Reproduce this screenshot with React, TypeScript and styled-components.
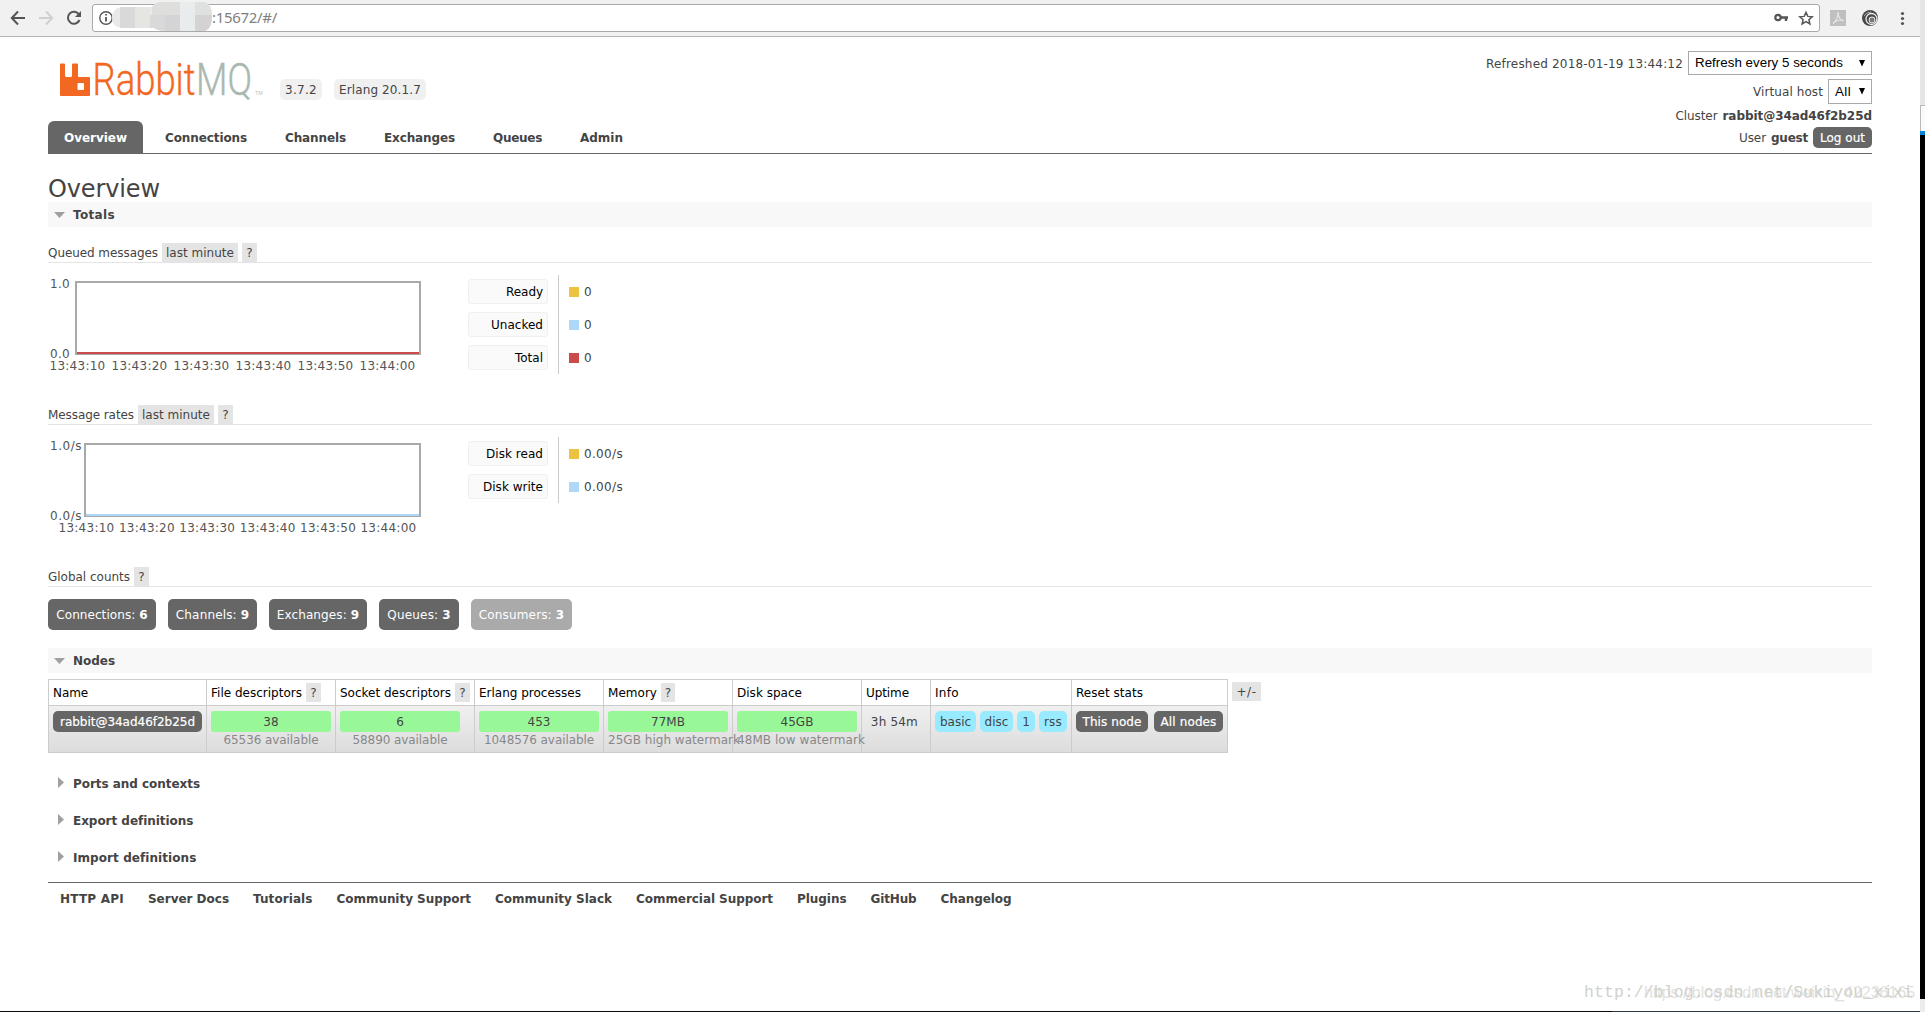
import React, { useLayoutEffect, useRef } from 'react';
import styled, { createGlobalStyle, css } from 'styled-components';

const Global = createGlobalStyle`
  * { box-sizing: border-box; }
  body {
    margin: 0;
    overflow: hidden;
    background: #fff;
    color: #444;
    font: 12px/20px Verdana, "DejaVu Sans", sans-serif;
  }
`;

/* ---------- text that keeps a fixed measure whatever the font's metrics ---------- */

const Run = styled.span`
  display: inline-block;
  white-space: pre;
`;

function Fit({ w, children }: { w: number; children: string }) {
  const ref = useRef<HTMLSpanElement>(null);
  useLayoutEffect(() => {
    const el = ref.current;
    if (!el) return;
    el.style.letterSpacing = '0px';
    el.style.width = 'auto';
    const natural = el.getBoundingClientRect().width;
    el.style.letterSpacing = `${(w - natural) / children.length}px`;
    el.style.width = `${w}px`;
  }, [w, children]);
  return <Run ref={ref}>{children}</Run>;
}

/* ---------- window ---------- */

const Screen = styled.div`
  display: grid;
  grid-template-columns: 1920px 5px;
  height: 1012px;
  overflow: hidden;
`;

const Window = styled.div`
  display: flex;
  flex-direction: column;
  position: relative;
  height: 1012px;
`;

const Edge = styled.div`
  display: flex;
  flex-direction: column;
`;

const EdgePart = styled.div<{ $h: number; $bg: string; $line?: boolean }>`
  height: ${p => p.$h}px;
  flex: none;
  background: ${p => p.$bg};
  ${p => p.$line && css`border-left: 1px solid #b8b8b8; border-top: 1px solid #b8b8b8;`}
`;

const BottomEdge = styled.div`
  height: 1px;
  margin-top: auto;
  background: linear-gradient(90deg, #0a0a0a 0 1612px, #2b3a49 1612px);
`;

/* ---------- browser toolbar ---------- */

const Toolbar = styled.div`
  display: flex;
  flex: none;
  height: 37px;
  background: #f1f1f1;
  border-bottom: 1px solid #b5b3b5;
`;

const NavIcons = styled.svg`
  flex: none;
  width: 92px;
  height: 36px;
`;

const AddressBar = styled.div`
  display: flex;
  align-items: center;
  width: 1728px;
  height: 28px;
  margin-top: 4px;
  background: #fff;
  border: 1px solid #a9a9a9;
  border-radius: 3px;
`;

const AddressStart = styled.svg`
  flex: none;
  width: 119px;
  height: 32px;
`;

const Url = styled.span`
  flex: 1;
  height: 26px;
  color: #808080;
  font: 15px/24px "Noto Sans", sans-serif;
`;

const AddressIcons = styled.svg`
  flex: none;
  width: 50px;
  height: 26px;
`;

const ToolIcons = styled.svg`
  flex: none;
  width: 100px;
  height: 36px;
`;

/* ---------- page header ---------- */

const Header = styled.header`
  display: flex;
  flex: none;
  justify-content: space-between;
  height: 117px;
  margin: 0 48px;
  border-bottom: 1px solid #666;
`;

const Brand = styled.div`
  display: flex;
  flex-direction: column;
`;

const LogoRow = styled.div`
  display: flex;
  height: 84px;
  padding-left: 12px;
`;

const Logo = styled.svg`
  width: 220px;
  height: 84px;
`;

const Version = styled.span`
  height: 21px;
  margin: 42px 12px 0 0;
  padding: 0 5px;
  line-height: 23px;
  background: #f0f0f0;
  border-radius: 5px;
`;

const Tabs = styled.nav`
  display: flex;
  gap: 6px;
`;

const Tab = styled.a<{ $active?: boolean }>`
  height: 32px;
  padding: 0 16px;
  line-height: 35px;
  font-weight: bold;
  border-radius: 6px 6px 0 0;
  ${p => p.$active && css`color: #fff; background: #666;`}
`;

const Status = styled.div`
  display: flex;
  flex-direction: column;
  align-items: flex-end;
  padding-top: 14px;
`;

const StatusRow = styled.div<{ $h: number; $drop?: number }>`
  display: flex;
  align-items: center;
  gap: 5px;
  height: ${p => p.$h}px;
  & > span { margin-top: ${p => p.$drop || 0}px; }
`;

const Select = styled.div<{ $w: number; $h: number }>`
  display: flex;
  align-items: center;
  justify-content: space-between;
  width: ${p => p.$w}px;
  height: ${p => p.$h}px;
  padding: 0 6px;
  color: #000;
  background: #fff;
  border: 1px solid #a9a9a9;
  font: 13.33px/20px "Liberation Sans", Arial, sans-serif;
`;

const Caret = styled.svg`
  width: 6px;
  height: 7px;
  fill: #000;
`;

const Button = styled.button<{ $w?: number }>`
  display: flex;
  justify-content: center;
  flex: none;
  width: ${p => p.$w}px;
  height: 21px;
  padding: 1px 0 0;
  border: 0;
  border-radius: 5px;
  background: #666;
  color: #fff;
  font: 12px/21px Verdana, "DejaVu Sans", sans-serif;
  -webkit-text-stroke: 0.2px #fff;
`;

/* ---------- page body ---------- */

const Main = styled.main`
  display: flex;
  flex-direction: column;
  margin: 0 48px;
`;

const Title = styled.h1`
  height: 48px;
  margin: 0;
  font-size: 24px;
  font-weight: normal;
  line-height: 71px;
`;

const Section = styled.h2<{ $open?: boolean; $mb?: number }>`
  display: flex;
  align-items: flex-start;
  height: 25px;
  margin: 0 0 ${p => p.$mb || 0}px;
  font-size: 12px;
  line-height: 27px;
  background: ${p => (p.$open ? '#f8f8f8' : 'transparent')};
`;

const Arrow = styled.svg`
  width: 25px;
  height: 25px;
  fill: #a0a0a0;
`;

const Caption = styled.h3`
  display: flex;
  gap: 4px;
  height: 20px;
  margin: 0;
  font-size: 12px;
  font-weight: normal;
  line-height: 21px;
  border-bottom: 1px solid #e4e4e4;
`;

const Chip = styled.span<{ $w: number }>`
  display: inline-block;
  flex: none;
  width: ${p => p.$w}px;
  height: 19px;
  line-height: 21px;
  color: #444;
  background: #e4e4e4;
  text-align: center;
`;

const Stats = styled.div<{ $h: number }>`
  display: flex;
  height: ${p => p.$h}px;
  padding-top: 12px;
`;

const ChartGrid = styled.div<{ $label: number }>`
  display: grid;
  grid-template-columns: ${p => p.$label}px ${p => 373 - p.$label}px;
  grid-template-rows: 74px 20px;
  width: 420px;
  padding-top: 6px;
`;

const YAxis = styled.div`
  display: flex;
  flex-direction: column;
  align-items: flex-start;
  justify-content: space-between;
  height: 90px;
  margin-top: -7px;
  padding-left: 2px;
  color: #545454;
`;

const Plot = styled.div<{ $line: string }>`
  display: flex;
  align-items: flex-end;
  border: 2px solid #a9a9a9;
  border-bottom-width: 1px;
  &::after {
    content: "";
    flex: 1;
    height: 2px;
    background: ${p => p.$line};
  }
`;

const XAxis = styled.div<{ $start: number; $gap: number }>`
  display: flex;
  grid-column: 1 / 3;
  gap: ${p => p.$gap}px;
  padding: 1px 0 0 ${p => p.$start}px;
  color: #545454;
`;

const Legend = styled.div<{ $rows: number }>`
  display: grid;
  grid-template-columns: 90px auto;
  grid-auto-rows: 33px;
  align-items: center;
  height: ${p => p.$rows * 33}px;
`;

const LegendName = styled.div`
  width: 80px;
  height: 25px;
  padding-right: 4px;
  line-height: 25px;
  color: #000;
  text-align: right;
  background: #fafafa;
  border: 1px solid #f0f0f0;
  border-radius: 3px;
`;

const LegendValue = styled.div`
  display: flex;
  align-items: center;
  gap: 5px;
  height: 33px;
  padding-left: 10px;
  border-left: 1px solid #ccc;
`;

const Swatch = styled.i<{ $c: string }>`
  width: 10px;
  height: 10px;
  margin-top: 1px;
  background: ${p => p.$c};
`;

const Counts = styled.div`
  display: flex;
  gap: 12px;
  height: 61px;
  padding-top: 12px;
`;

const Count = styled.a<{ $w: number; $off?: boolean }>`
  display: flex;
  justify-content: center;
  width: ${p => p.$w}px;
  height: 31px;
  line-height: 33px;
  color: #fff;
  background: ${p => (p.$off ? '#aaa' : '#666')};
  border-radius: 5px;
  b { margin-left: 4px; }
`;

const NodesRow = styled.div`
  display: flex;
  gap: 4px;
  height: 98px;
  padding-top: 6px;
  & > span { margin-top: 3px; }
`;

const Table = styled.div`
  display: grid;
  grid-template-columns: 158px 129px 139px 129px 129px 129px 69px 141px 156px;
  grid-template-rows: 26px 47px;
  width: 1180px;
  height: 74px;
  border-left: 1px solid #ccc;
  border-top: 1px solid #ccc;
`;

const Th = styled.div`
  display: flex;
  align-items: center;
  gap: 4px;
  padding-left: 4px;
  color: #000;
  border: solid #ccc;
  border-width: 0 1px 1px 0;
`;

const Td = styled.div`
  padding: 5px 0 0 4px;
  border: solid #ccc;
  border-width: 0 1px 1px 0;
  background: linear-gradient(#f0f0f0, #dcdcdc);
`;

const Bar = styled.div`
  width: 120px;
  height: 21px;
  line-height: 23px;
  text-align: center;
  background: #98f898;
  border-radius: 3px;
`;

const Sub = styled.div`
  position: relative;
  width: 120px;
  height: 16px;
  line-height: 16px;
  color: #888;
  text-align: center;
  white-space: nowrap;
`;

const Inline = styled.div<{ $gap: number }>`
  display: flex;
  gap: ${p => p.$gap}px;
  height: 21px;
  line-height: 23px;
`;

const Tag = styled.span<{ $w: number }>`
  width: ${p => p.$w}px;
  text-align: center;
  background: #98ebff;
  border-radius: 5px;
`;

const Footer = styled.footer`
  display: flex;
  gap: 24px;
  padding: 6px 0 0 12px;
  font-weight: bold;
  border-top: 1px solid #666;
`;

/* The two blog addresses are stamped over the page's lower right corner. */
const Stamp = styled.div<{ $right: number; $bottom: number; $mono?: boolean }>`
  position: absolute;
  right: ${p => p.$right}px;
  bottom: ${p => p.$bottom}px;
  line-height: 20px;
  ${p => p.$mono
    ? css`color: #d2d2cc; font-family: "Liberation Mono", monospace; font-size: 16.5px;`
    : css`color: #e2e2e2; font-family: "Liberation Sans", sans-serif; font-size: 16px;`}
`;

/* ---------- data ---------- */

const tabs: [string, number][] = [
  ['Overview', 63], ['Connections', 82], ['Channels', 61], ['Exchanges', 71], ['Queues', 49], ['Admin', 43],
];
const times = ['13:43:10', '13:43:20', '13:43:30', '13:43:40', '13:43:50', '13:44:00'];
const counts: [string, number, number, number][] = [
  ['Connections:', 6, 108, 79], ['Channels:', 9, 89, 61], ['Exchanges:', 9, 98, 70], ['Queues:', 3, 80, 51], ['Consumers:', 3, 101, 73],
];
const links: [string, number][] = [
  ['HTTP API', 64], ['Server Docs', 81], ['Tutorials', 59.5], ['Community Support', 134.5], ['Community Slack', 117],
  ['Commercial Support', 137], ['Plugins', 49.5], ['GitHub', 46], ['Changelog', 71],
];
const bars: [string, string, number][] = [
  ['38', '65536 available', 95], ['6', '58890 available', 95], ['453', '1048576 available', 110],
  ['77MB', '25GB high watermark', 132], ['45GB', '48MB low watermark', 128],
];

function Chart({ label, unit, line, start, gap }: { label: number; unit: string; line: string; start: number; gap: number }) {
  const w = unit ? 32 : 20;
  return (
    <ChartGrid $label={label}>
      <YAxis><Fit w={w}>{'1.0' + unit}</Fit><Fit w={w}>{'0.0' + unit}</Fit></YAxis>
      <Plot $line={line} />
      <XAxis $start={start} $gap={gap}>{times.map(t => <Fit key={t} w={56}>{t}</Fit>)}</XAxis>
    </ChartGrid>
  );
}

function Key({ rows }: { rows: [string, number, string, string, number][] }) {
  return (
    <Legend $rows={rows.length}>
      {rows.map(([name, w, color, value, vw]) => (
        <React.Fragment key={name}>
          <LegendName><Fit w={w}>{name}</Fit></LegendName>
          <LegendValue><Swatch $c={color} /><Fit w={vw}>{value}</Fit></LegendValue>
        </React.Fragment>
      ))}
    </Legend>
  );
}

const Down = () => <Arrow viewBox="0 0 25 25"><path d="M6 10H17L11.5 16Z" /></Arrow>;
const Right = () => <Arrow viewBox="0 0 25 25"><path d="M10 6L16 11.5L10 17Z" /></Arrow>;
const Drop = () => <Caret viewBox="0 0 6 7"><path d="M0 0H6L3 6.5Z" /></Caret>;

export default function App() {
  return (
    <Screen>
      <Global />
      <Window>
        <Toolbar>
          <NavIcons viewBox="0 0 92 36" fill="none" strokeWidth="2">
            <path d="M25 18H12M18 11.5L11.8 18L18 24.5" stroke="#555" />
            <path d="M39 18H52M46 11.5L52.2 18L46 24.5" stroke="#d0d0d0" />
            <path d="M79 14.5A6 6 0 1 0 79.5 20" stroke="#555" />
            <path d="M81 11V17H75Z" fill="#555" />
          </NavIcons>
          <AddressBar>
            <AddressStart viewBox="93 2 119 32">
              <circle cx="106" cy="18" r="6.2" fill="none" stroke="#555" strokeWidth="1.4" />
              <path d="M106 17V21.5M106 14V15.6" stroke="#555" strokeWidth="1.8" />
              <clipPath id="smudge"><path d="M122 7H152Q156 1 166 1H198Q212 1 212 15Q212 31 203 31H168Q157 31 154 28H122Q112 27 112 18Q112 8 122 7Z" /></clipPath>
              <g clipPath="url(#smudge)">
                <rect x="110" y="0" width="105" height="34" fill="#e9e9e8" />
                <rect x="120" y="7" width="15" height="21" fill="#d8dad9" />
                <rect x="135" y="7" width="15" height="21" fill="#e5e5e2" />
                <rect x="152" y="0" width="28" height="15" fill="#dededd" />
                <rect x="150" y="15" width="15" height="16" fill="#d9d9d9" />
                <rect x="165" y="15" width="15" height="16" fill="#d4d3d5" />
                <rect x="180" y="0" width="15" height="34" fill="#e9ecec" />
                <rect x="195" y="0" width="17" height="15" fill="#dfe0e0" />
                <rect x="195" y="15" width="17" height="16" fill="#d5d2d3" />
              </g>
            </AddressStart>
            <Url><Fit w={65}>:15672/#/</Fit></Url>
            <AddressIcons viewBox="1769 5 50 26">
              <g fill="none" stroke="#555">
                <circle cx="1778" cy="17.5" r="2.7" strokeWidth="2.2" />
                <path d="M1781 17.5H1788M1786 17.5V21" strokeWidth="2.4" />
                <path d="M1806 12.3L1807.8 16.4L1812.2 16.8L1808.9 19.7L1809.9 24L1806 21.7L1802.1 24L1803.1 19.7L1799.8 16.8L1804.2 16.4Z" strokeWidth="1.5" />
              </g>
            </AddressIcons>
          </AddressBar>
          <ToolIcons viewBox="1820 0 100 36" fill="none">
            <rect x="1830" y="10" width="16" height="16" fill="#c0c0c0" />
            <path d="M1838 12.5C1838.5 17 1840 20 1843.5 20.5C1840 19.5 1836 20.5 1833 23.5C1836 21 1838.5 16 1838 12.5Z" stroke="#f1f1f1" />
            <circle cx="1870" cy="18" r="8" fill="#484848" />
            <circle cx="1871.5" cy="19" r="5.5" stroke="#eee" strokeWidth="1.3" />
            <circle cx="1872" cy="20" r="3" fill="#777" stroke="#eee" />
            <path d="M1864 16Q1866 12 1871 12" stroke="#aaa" />
            <g fill="#555"><circle cx="1902.5" cy="13.5" r="1.6" /><circle cx="1902.5" cy="18.5" r="1.6" /><circle cx="1902.5" cy="23.5" r="1.6" /></g>
          </ToolIcons>
        </Toolbar>

        <Header>
          <Brand>
            <LogoRow>
              <Logo viewBox="60 37 220 84">
                <path d="M60 64.5Q60 63.5 61 63.5H64Q65 63.5 65 64.5V75.5Q65 77 66.5 77H70.5Q72 77 72 75.5V64.5Q72 63.5 73 63.5H77Q78 63.5 78 64.5V76Q78 77 79 77H89Q90 77 90 78V95Q90 96 89 96H61Q60 96 60 95ZM78.5 83Q77.5 83 77.5 84V89Q77.5 90 78.5 90H83Q84 90 84 89V84Q84 83 83 83Z" fill="#f26822" fillRule="evenodd" />
                <g fontFamily="Roboto, sans-serif" fontWeight="300" fontSize="45" strokeWidth="0.4">
                  <text x="92.5" y="95" textLength="103" lengthAdjust="spacingAndGlyphs" fill="#f26822" stroke="#f26822">Rabbit</text>
                  <text x="196" y="95" textLength="56" lengthAdjust="spacingAndGlyphs" fill="#a9b8b1" stroke="#a9b8b1">MQ</text>
                </g>
                <text x="255" y="95" fill="#b8c2bd" fontFamily="Liberation Sans, sans-serif" fontSize="5.5">TM</text>
              </Logo>
              <Version><Fit w={32}>3.7.2</Fit></Version>
              <Version><Fit w={82}>Erlang 20.1.7</Fit></Version>
            </LogoRow>
            <Tabs>
              {tabs.map(([name, w], i) => <Tab key={name} $active={i === 0}><Fit w={w}>{name}</Fit></Tab>)}
            </Tabs>
          </Brand>
          <Status>
            <StatusRow $h={24} $drop={2}>
              <Fit w={197}>Refreshed 2018-01-19 13:44:12</Fit>
              <Select $w={184} $h={24}><Fit w={148}>Refresh every 5 seconds</Fit><Drop /></Select>
            </StatusRow>
            <StatusRow $h={33}>
              <Fit w={70}>Virtual host</Fit>
              <Select $w={44} $h={25}><Fit w={16}>All</Fit><Drop /></Select>
            </StatusRow>
            <StatusRow $h={16}><Fit w={42}>Cluster</Fit><b><Fit w={149.5}>rabbit@34ad46f2b25d</Fit></b></StatusRow>
            <StatusRow $h={27}><Fit w={27}>User</Fit><b><Fit w={37}>guest</Fit></b><Button $w={59}><Fit w={45}>Log out</Fit></Button></StatusRow>
          </Status>
        </Header>

        <Main>
          <Title><Fit w={112}>Overview</Fit></Title>
          <Section $open $mb={16}><Down /><Fit w={42}>Totals</Fit></Section>

          <Caption><Fit w={110}>Queued messages</Fit><Chip $w={76}><Fit w={68}>last minute</Fit></Chip><Chip $w={15}>?</Chip></Caption>
          <Stats $h={142}>
            <Chart label={27} unit="" line="#cb4b4b" start={1.5} gap={6} />
            <Key rows={[
              ['Ready', 37, '#edc240', '0', 7],
              ['Unacked', 52, '#afd8f8', '0', 7],
              ['Total', 28, '#cb4b4b', '0', 7],
            ]} />
          </Stats>

          <Caption><Fit w={86}>Message rates</Fit><Chip $w={76}><Fit w={68}>last minute</Fit></Chip><Chip $w={15}>?</Chip></Caption>
          <Stats $h={142}>
            <Chart label={36} unit="/s" line="#afd8f8" start={10.5} gap={4.4} />
            <Key rows={[
              ['Disk read', 57, '#edc240', '0.00/s', 39],
              ['Disk write', 60, '#afd8f8', '0.00/s', 39],
            ]} />
          </Stats>

          <Caption><Fit w={82}>Global counts</Fit><Chip $w={15}>?</Chip></Caption>
          <Counts>
            {counts.map(([name, n, w, tw]) => (
              <Count key={name} $w={w} $off={name === 'Consumers:'}><Fit w={tw}>{name}</Fit><b>{n}</b></Count>
            ))}
          </Counts>

          <Section $open><Down /><Fit w={42}>Nodes</Fit></Section>
          <NodesRow>
            <Table>
              <Th><Fit w={35}>Name</Fit></Th>
              <Th><Fit w={91}>File descriptors</Fit><Chip $w={15}>?</Chip></Th>
              <Th><Fit w={111}>Socket descriptors</Fit><Chip $w={15}>?</Chip></Th>
              <Th><Fit w={102}>Erlang processes</Fit></Th>
              <Th><Fit w={49}>Memory</Fit><Chip $w={14}>?</Chip></Th>
              <Th><Fit w={65}>Disk space</Fit></Th>
              <Th><Fit w={43}>Uptime</Fit></Th>
              <Th><Fit w={24}>Info</Fit></Th>
              <Th><Fit w={67}>Reset stats</Fit></Th>
              <Td><Button $w={149}><Fit w={135}>rabbit@34ad46f2b25d</Fit></Button></Td>
              {bars.map(([value, sub, w]) => (
                <Td key={value}><Bar>{value}</Bar><Sub><Fit w={w}>{sub}</Fit></Sub></Td>
              ))}
              <Td><Inline $gap={1}><Run>{' '}</Run><Fit w={47}>3h 54m</Fit></Inline></Td>
              <Td>
                <Inline $gap={4}>
                  <Tag $w={41}><Fit w={31}>basic</Fit></Tag><Tag $w={33}><Fit w={24}>disc</Fit></Tag>
                  <Tag $w={18}>1</Tag><Tag $w={28}><Fit w={18}>rss</Fit></Tag>
                </Inline>
              </Td>
              <Td><Inline $gap={6}><Button $w={72}><Fit w={59}>This node</Fit></Button><Button $w={69}><Fit w={56}>All nodes</Fit></Button></Inline></Td>
            </Table>
            <Chip $w={29}><Fit w={20}>+/-</Fit></Chip>
          </NodesRow>

          <Section $mb={12}><Right /><Fit w={127}>Ports and contexts</Fit></Section>
          <Section $mb={12}><Right /><Fit w={120}>Export definitions</Fit></Section>
          <Section $mb={12}><Right /><Fit w={123}>Import definitions</Fit></Section>
          <Footer>{links.map(([name, w]) => <Fit key={name} w={w}>{name}</Fit>)}</Footer>
        </Main>

        <BottomEdge />
        <Stamp $right={5} $bottom={9}><Fit w={271}>https://blog.csdn.net/weixin_42236165</Fit></Stamp>
        <Stamp $right={7} $bottom={9} $mono><Fit w={329}>http://blog.csdn.net/Sukiyou_xixi</Fit></Stamp>
      </Window>
      <Edge>
        <EdgePart $h={105} $bg="#e6e6e6" />
        <EdgePart $h={26} $bg="#fafafa" $line />
        <EdgePart $h={4} $bg="#0a84d8" />
        <EdgePart $h={864} $bg="#000" />
        <EdgePart $h={13} $bg="#ececec" />
      </Edge>
    </Screen>
  );
}
